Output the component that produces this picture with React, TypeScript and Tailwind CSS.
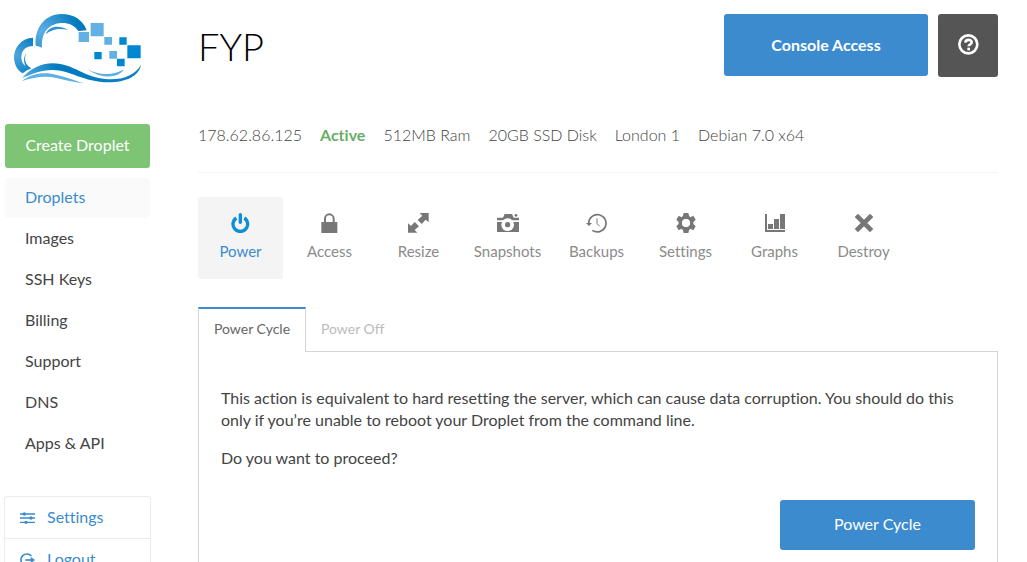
import type { ReactNode } from 'react';

function Logo() {
  return (
    <svg viewBox="36 36 396 222" className="h-[74px] w-[132px]" aria-label="Home" role="img">
      <defs>
        <radialGradient id="arc" gradientUnits="userSpaceOnUse" cx="125" cy="95" r="110">
          <stop offset="0" stopColor="#5fb0e5" />
          <stop offset="1" stopColor="#0079be" />
        </radialGradient>
        <radialGradient id="side" gradientUnits="userSpaceOnUse" cx="48" cy="165" r="80">
          <stop offset="0" stopColor="#4ea5dd" />
          <stop offset="1" stopColor="#0079be" />
        </radialGradient>
        <linearGradient id="wave" x1="0" x2="1" y1="0" y2="0">
          <stop offset="0" stopColor="#55abe0" />
          <stop offset=".3" stopColor="#0079be" />
          <stop offset="1" stopColor="#0c80c6" />
        </linearGradient>
      </defs>
      <path fill="url(#arc)" d="M107 137C103 85 133 43 184 42C223 42 250 62 260 91L235 93C222 74 203 68 184 69C148 71 123 96 126 143C120 140 114 138 107 137Z" />
      <path fill="#2f93d3" d="M137 102C148 77 177 75 204 90C181 84 160 85 137 102Z" />
      <path fill="url(#side)" d="M99 113C64 114 43 142 42 171C42 192 52 211 68 220L88 206C68 196 61 181 65 163C69 146 82 138 99 138Z" />
      <path fill="#1686ca" d="M79 159C71 177 76 196 94 205L86 209C71 198 68 174 79 159Z" />
      <path fill="url(#wave)" d="M66 234C91 207 122 190 158 190C222 190 253 236 327 238C374 239 406 223 423 195C417 229 376 247 327 247C247 246 214 211 160 210C124 209 97 222 66 234Z" />
      <path fill="#5fb0e5" d="M66 243C99 218 136 216 171 225C198 232 223 240 250 250C220 246 195 240 169 234C134 226 101 232 66 243Z" />
      <path fill="#5fb0e5" d="M262 207C298 228 342 226 372 208C354 237 300 237 262 207Z" />
      <g fill="#62b1e5">
        <path d="M236 96h31v30h-31zM272 69h39v40h-39zM313 111h23v23h-23zM328 153h23v23h-23z" />
      </g>
      <path fill="#0087d1" d="M358 112h22v22h-22zM382 136h40v39h-40zM283 156h22v22h-22zM351 176h23v23h-23z" />
    </svg>
  );
}

function ToolIcon({ children }: { children: ReactNode }) {
  return (
    <svg viewBox="0 0 66 60" className="h-5 w-[22px]" fill="currentColor" aria-hidden="true">
      {children}
    </svg>
  );
}

const tools: { label: string; icon: ReactNode }[] = [
  {
    label: 'Power',
    icon: (
      <g fill="none" stroke="#0b8fd6" strokeWidth="10">
        <path d="M19 15A22 22 0 1 0 43 15" />
        <path d="M31 5v23" strokeLinecap="round" />
      </g>
    ),
  },
  {
    label: 'Access',
    icon: (
      <>
        <path d="M7 27h48v33H7z" />
        <path d="M18 28V17a13 13 0 0 1 26 0v11" fill="none" stroke="currentColor" strokeWidth="6" />
      </>
    ),
  },
  {
    label: 'Resize',
    icon: <path d="M35 0H62V28L53 20L41 33L29 21L43 8ZM0 31L9 39L20 27L33 40L20 51L28 59H0Z" />,
  },
  {
    label: 'Snapshots',
    icon: (
      <>
        <path d="M0 14h18l5-11h22l5 11h16v8H0zM0 27h66v30H0z" />
        <circle cx="32" cy="35" r="19" fill="#fff" />
        <circle cx="32" cy="35" r="8" />
        <circle cx="57" cy="7" r="4" />
      </>
    ),
  },
  {
    label: 'Backups',
    icon: (
      <>
        <path d="M8 31A26 26 0 1 1 19 52" fill="none" stroke="currentColor" strokeWidth="5" />
        <path d="M0 30h18l-9 9z" />
        <path d="M33 16v16l8 8" fill="none" stroke="currentColor" strokeWidth="3" />
      </>
    ),
  },
  {
    label: 'Settings',
    icon: (
      <>
        <circle cx="33" cy="30" r="17" fill="none" stroke="currentColor" strokeWidth="11" />
        <path d="M26 0h14l3 12H23zM26 60h14l3-12H23zM4 20l7-12 13 7-10 15zM62 20l-7-12-13 7 10 15zM4 40l7 12 13-7-10-15zM62 40l-7 12-13-7 10-15z" />
        <circle cx="33" cy="30" r="12" fill="#fff" />
      </>
    ),
  },
  {
    label: 'Graphs',
    icon: <path d="M3 3h6v48h54v6H3zM12 33h15v15H12zM30 18h15v30H30zM48 3h15v45H48z" />,
  },
  {
    label: 'Destroy',
    icon: <path d="M10 7L56 53M56 7L10 53" stroke="currentColor" strokeWidth="14" />,
  },
];

const nav = ['Droplets', 'Images', 'SSH Keys', 'Billing', 'Support', 'DNS', 'Apps & API'];

export default function App() {
  return (
    <div className="flex bg-white pl-1 pr-[29px] font-['Lato','Liberation_Sans',sans-serif] text-base text-[#444] [font-variant-ligatures:none]">
      <aside className="mr-[47px] w-[147px] shrink-0 pt-3">
        <a href="#home" className="block pl-2">
          <Logo />
        </a>
        <div className="mt-[38px] px-px">
          <button type="button" className="h-11 w-full rounded-[3px] bg-[#7dc475] pb-0.5 text-white">
            Create Droplet
          </button>
          <nav className="mt-2.5 flex flex-col gap-px">
            {nav.map((item, i) => (
              <a
                key={item}
                href="#nav"
                className={i === 0 ? 'h-10 rounded-[3px] bg-[#fafafa] px-5 leading-[38px] text-[#3b8bce]' : 'h-10 px-5 leading-[38px]'}
              >
                {item}
              </a>
            ))}
          </nav>
        </div>
        <div className="mt-8 rounded-[3px] border border-[#ebebeb] text-[#3b8bce]">
          <a href="#settings" className="flex h-[42px] items-center gap-3 border-b border-[#ebebeb] px-[15px]">
            <svg viewBox="0 0 45 36" className="h-3 w-[15px]" aria-hidden="true" fill="currentColor">
              <path d="M0 4h45v4H0zM0 16h45v4H0zM0 29h45v4H0z" />
              <circle cx="13" cy="6" r="5" />
              <circle cx="33" cy="18" r="5" />
              <circle cx="18" cy="31" r="5" />
            </svg>
            <span className="pb-0.5">Settings</span>
          </a>
          <a href="#logout" className="flex h-[42px] items-center gap-3 px-[15px]">
            <svg viewBox="0 0 45 42" className="h-3.5 w-[15px]" aria-hidden="true">
              <path d="M34 9A18 18 0 1 0 34 33" fill="none" stroke="currentColor" strokeWidth="5" />
              <path d="M16 21h22" stroke="currentColor" strokeWidth="5" />
              <path d="M32 11l13 10-13 10z" fill="currentColor" />
            </svg>
            <span className="pb-0.5">Logout</span>
          </a>
        </div>
      </aside>

      <main className="min-w-0 flex-1 pt-3.5">
        <header className="flex items-start">
          <h1 className="flex-1 text-[38px] font-light leading-[64px] text-black">FYP</h1>
          <button type="button" className="h-[62px] w-[204px] rounded-[3px] bg-[#3b8bce] text-base font-bold text-white">
            Console Access
          </button>
          <button type="button" aria-label="Help" className="ml-2.5 flex h-[63px] w-[60px] items-center justify-center rounded-[3px] bg-[#555] pb-0.5 text-white">
            <svg viewBox="0 0 63 63" className="size-[21px]" fill="none" stroke="currentColor" aria-hidden="true">
              <circle cx="31" cy="31" r="27" strokeWidth="8" />
              <path d="M22 26C23 15 41 15 41 25C41 32 32 30 32 37" strokeWidth="8" />
              <path d="M32 41v8" strokeWidth="8" />
            </svg>
          </button>
        </header>

        <div className="mt-[45px] flex h-[50px] gap-[18px] border-b border-[#f3f3f3] text-base font-light">
          <span>178.62.86.125</span>
          <span className="font-bold text-[#69ad66]">Active</span>
          <span>512MB Ram</span>
          <span>20GB SSD Disk</span>
          <span>London 1</span>
          <span>Debian 7.0 x64</span>
        </div>

        <div className="mt-6 flex gap-1 text-[15px] text-[#8b8b8b]">
          {tools.map((tool, i) => (
            <button
              key={tool.label}
              type="button"
              className={
                i === 0
                  ? 'flex h-[82px] w-[85px] flex-col items-center rounded-[3px] bg-[#f4f4f4] pt-4 text-[#3b8bce]'
                  : 'flex h-[82px] w-[85px] flex-col items-center rounded-[3px] pt-4'
              }
            >
              <span className={i === 0 ? '' : 'text-[#777]'}>
                <ToolIcon>{tool.icon}</ToolIcon>
              </span>
              <span className="mt-2 leading-5">{tool.label}</span>
            </button>
          ))}
        </div>

        <section className="mt-7">
          <div role="tablist" className="flex text-sm">
            <button type="button" role="tab" aria-selected="true" className="relative -mb-px h-[45px] w-[108px] border-x border-t-2 border-x-[#d5d5d5] border-t-[#3b8bce] bg-white pb-1 text-[#666]">
              Power Cycle
            </button>
            <button type="button" role="tab" aria-selected="false" className="h-11 px-[15px] text-[#bbb]">
              Power Off
            </button>
          </div>
          <div role="tabpanel" className="border border-[#d5d5d5] px-[22px] pb-6 pt-[35px] leading-[22px]">
            <p>
              This action is equivalent to hard resetting the server, which can cause data corruption. You should do this
              only if you’re unable to reboot your Droplet from the command line.
            </p>
            <p className="mt-4">Do you want to proceed?</p>
            <div className="mt-[31px] flex justify-end">
              <button type="button" className="h-[50px] w-[195px] rounded-[3px] bg-[#3b8bce] pb-0.5 text-white">
                Power Cycle
              </button>
            </div>
          </div>
        </section>
      </main>
    </div>
  );
}
